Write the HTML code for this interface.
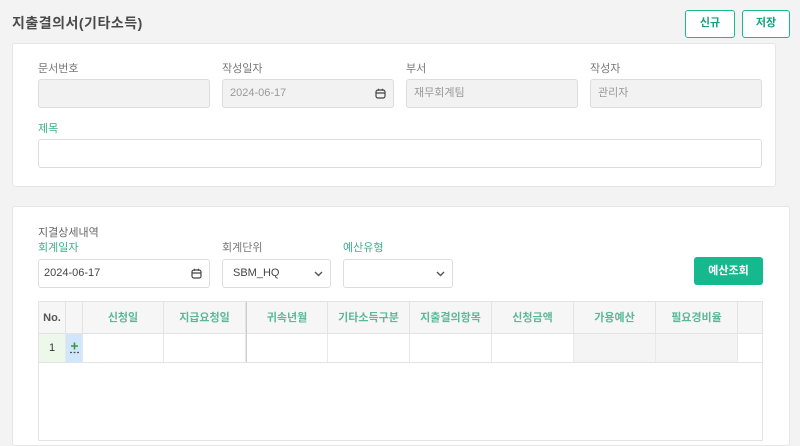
<!DOCTYPE html>
<html><head><meta charset="utf-8"><style>
*{box-sizing:border-box;margin:0;padding:0}
body{width:800px;height:429px;overflow:hidden;background:#f3f3f3;font-family:"Liberation Sans","Noto Sans CJK KR",sans-serif;position:relative;color:#555}
.a{position:absolute}
.lbl{font-size:11px;color:#777}
.g{color:#3fae8c}
.inp{position:absolute;height:29px;border:1px solid #ddd;border-radius:3px;background:#fff;font-size:11px;color:#444;padding-left:7px;line-height:27px}
.dis{background:#f2f2f2;color:#999}
.card{position:absolute;background:#fff;border:1px solid #e6e6e6;border-radius:3px}
.btn{position:absolute;border:1px solid #16b98e;border-radius:3px;background:#fff;color:#16a07b;font-size:11px;font-weight:bold;text-align:center;line-height:25px}
.th{position:absolute;top:0;height:32px;border-right:1px solid #e3e3e3;font-size:11px;font-weight:bold;color:#5cb899;text-align:center;line-height:32px}
.td{position:absolute;top:32px;height:28px;border-right:1px solid #e8e8e8}
svg.ic{position:absolute}
</style></head><body>
<div class="a" style="left:12px;top:13px;font-size:14px;font-weight:bold;color:#4a4a4a;letter-spacing:0.5px">지출결의서(기타소득)</div>
<div class="btn" style="left:685px;top:10px;width:50px;height:28px">신규</div>
<div class="btn" style="left:742px;top:10px;width:48px;height:28px">저장</div>

<div class="card" style="left:12px;top:43px;width:764px;height:144px"></div>
<div class="a lbl" style="left:38px;top:60px">문서번호</div>
<div class="a lbl" style="left:222px;top:60px">작성일자</div>
<div class="a lbl" style="left:406px;top:60px">부서</div>
<div class="a lbl" style="left:590px;top:60px">작성자</div>
<div class="inp dis" style="left:38px;top:79px;width:172px"></div>
<div class="inp dis" style="left:222px;top:79px;width:172px">2024-06-17<svg class="ic" style="right:7px;top:8px" width="11" height="11" viewBox="0 0 11 11"><rect x="1" y="2" width="9" height="8" rx="2" fill="none" stroke="#444" stroke-width="1.2"/><path d="M1 5h9M3.5 0.8v2M7.5 0.8v2" stroke="#444" stroke-width="1.2"/></svg></div>
<div class="inp dis" style="left:406px;top:79px;width:172px">재무회계팀</div>
<div class="inp dis" style="left:590px;top:79px;width:172px">관리자</div>
<div class="a lbl g" style="left:38px;top:120px">제목</div>
<div class="inp" style="left:38px;top:139px;width:724px"></div>

<div class="card" style="left:12px;top:206px;width:778px;height:240px"></div>
<div class="a lbl" style="left:38px;top:224px;color:#666">지결상세내역</div>
<div class="a lbl g" style="left:38px;top:239px">회계일자</div>
<div class="a lbl" style="left:222px;top:239px">회계단위</div>
<div class="a lbl g" style="left:343px;top:239px">예산유형</div>
<div class="inp" style="left:38px;top:259px;width:172px;padding-left:5px">2024-06-17<svg class="ic" style="right:7px;top:8px" width="11" height="11" viewBox="0 0 11 11"><rect x="1" y="2" width="9" height="8" rx="2" fill="none" stroke="#444" stroke-width="1.2"/><path d="M1 5h9M3.5 0.8v2M7.5 0.8v2" stroke="#444" stroke-width="1.2"/></svg></div>
<div class="inp" style="left:222px;top:259px;width:109px;padding-left:10px">SBM_HQ<svg class="ic" style="right:7px;top:11px" width="9" height="6" viewBox="0 0 9 6"><path d="M1 1l3.5 3.5L8 1" fill="none" stroke="#555" stroke-width="1.4"/></svg></div>
<div class="inp" style="left:343px;top:259px;width:110px"><svg class="ic" style="right:7px;top:11px" width="9" height="6" viewBox="0 0 9 6"><path d="M1 1l3.5 3.5L8 1" fill="none" stroke="#555" stroke-width="1.4"/></svg></div>
<div class="a" style="left:694px;top:257px;width:69px;height:28px;background:#16b98e;border-radius:3px;color:#fff;font-size:11px;font-weight:bold;text-align:center;line-height:28px">예산조회</div>

<div class="a" style="left:38px;top:301px;width:725px;height:140px;border:1px solid #e3e3e3;background:#fff;overflow:hidden">
<div class="a" style="left:0;top:0;width:725px;height:32px;background:#f6f6f6;border-bottom:1px solid #e3e3e3"></div>
<div class="th" style="left:0;width:27px;color:#555">No.</div>
<div class="th" style="left:27px;width:17px"></div>
<div class="th" style="left:44px;width:81px">신청일</div>
<div class="th" style="left:125px;width:82px">지급요청일</div>
<div class="th" style="left:207px;width:82px;border-left:1px solid #ccc">귀속년월</div>
<div class="th" style="left:289px;width:82px">기타소득구분</div>
<div class="th" style="left:371px;width:82px">지출결의항목</div>
<div class="th" style="left:453px;width:82px">신청금액</div>
<div class="th" style="left:535px;width:82px">가용예산</div>
<div class="th" style="left:617px;width:82px">필요경비율</div>
<div class="td" style="left:0;width:27px;background:#eef8ea;font-size:11px;color:#333;text-align:center;line-height:28px">1</div>
<div class="td" style="left:27px;width:17px;background:#cfe6fb"><svg class="ic" style="left:3px;top:8px" width="11" height="12" viewBox="0 0 11 12"><path d="M5.5 0.5v7M2 4h7" stroke="#3a9a3a" stroke-width="1.6"/><path d="M1 10.5h9" stroke="#555" stroke-width="1.2" stroke-dasharray="2 1.5"/></svg></div>
<div class="td" style="left:44px;width:81px"></div>
<div class="td" style="left:125px;width:82px"></div>
<div class="td" style="left:207px;width:82px;border-left:1px solid #ccc"></div>
<div class="td" style="left:289px;width:82px"></div>
<div class="td" style="left:371px;width:82px"></div>
<div class="td" style="left:453px;width:82px"></div>
<div class="td" style="left:535px;width:82px;background:#f4f4f4"></div>
<div class="td" style="left:617px;width:82px;background:#f4f4f4"></div>
<div class="a" style="left:0;top:60px;width:725px;border-top:1px solid #e3e3e3"></div>
</div>
</body></html>
